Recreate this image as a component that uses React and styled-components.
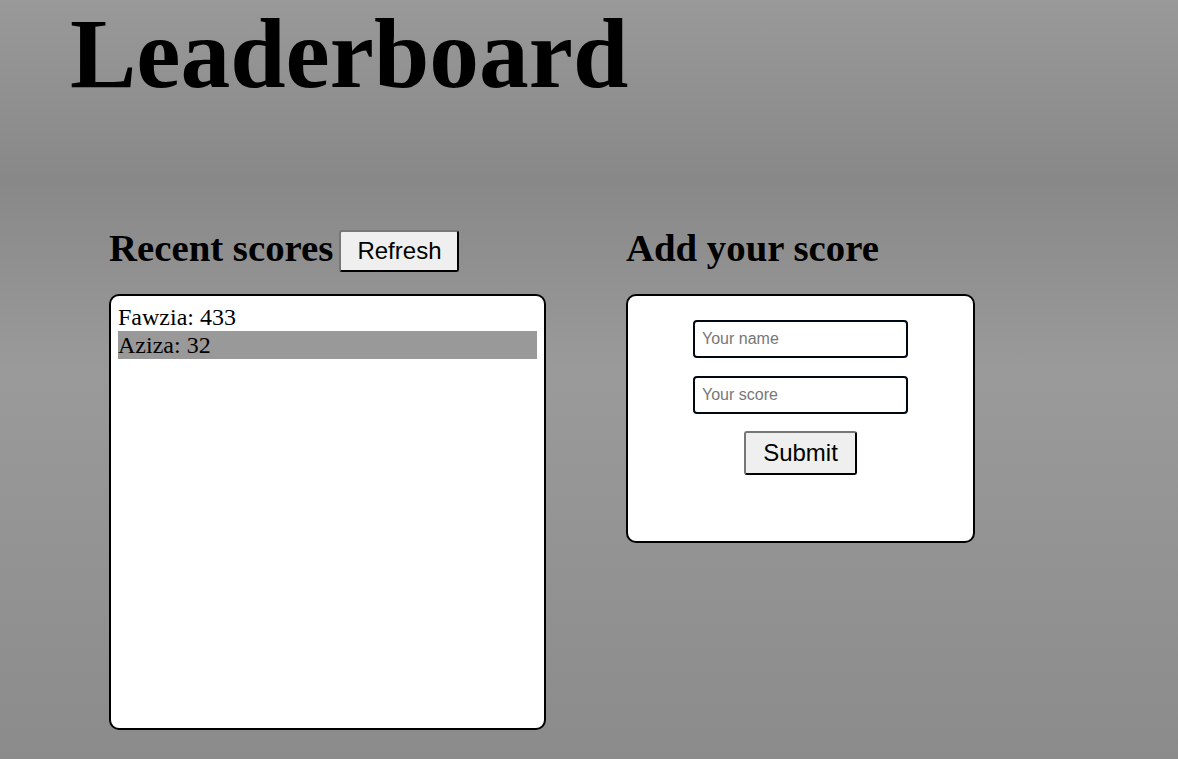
import React from 'react'
import styled, { createGlobalStyle } from 'styled-components'

const GlobalStyle = createGlobalStyle`
    html, body {
        margin: 0;
        min-height: 100%;
    }
    body {
        background: linear-gradient(to bottom, #999 0px, #888 180px, #9a9a9a 370px, #8b8b8b 759px);
        background-repeat: no-repeat;
        min-height: 759px;
        font-family: "Liberation Serif", "Times New Roman", serif;
        color: #000;
    }
`

const Page = styled.div`
    padding: 0 0 0 70px;
`

const Title = styled.h1`
    margin: 0;
    font-size: 99.5px;
    line-height: 108px;
    font-weight: bold;
`

const Columns = styled.div`
    display: flex;
    gap: 80px;
    margin-top: 118px;
    padding-left: 39px;
`

const Column = styled.section`
    display: flex;
    flex-direction: column;
`

const HeadingRow = styled.div`
    display: flex;
    align-items: flex-start;
    gap: 6px;
    height: 44px;
    margin-bottom: 24px;
`

const Heading = styled.h2`
    margin: 0;
    font-size: 38.8px;
    font-weight: bold;
    line-height: 44px;
`

const Button = styled.button`
    font-family: "Liberation Sans", Arial, sans-serif;
    font-size: 24px;
    line-height: 28px;
    padding: ${p => p.$tall ? '6px 17px' : '5px 16px'};
    margin-top: ${p => p.$tall ? '-1px' : '4px'};
    background: #efefef;
    color: #000;
    border: 2px outset #767676;
    border-right-color: #2b2b2b;
    border-bottom-color: #2b2b2b;
    border-radius: 3px;
    cursor: pointer;
`

const Card = styled.div`
    background: #fff;
    border: 2px solid #000;
    border-radius: 10px;
    box-sizing: border-box;
    width: ${p => p.$width}px;
    height: ${p => p.$height}px;
`

const ScoreList = styled.ul`
    list-style: none;
    margin: 0;
    padding: 7px;
`

const ScoreItem = styled.li`
    font-size: 24px;
    line-height: 28px;
    background: ${p => p.$odd ? '#999' : 'transparent'};
`

const Form = styled.form`
    display: flex;
    flex-direction: column;
    align-items: center;
    padding-top: 24px;
    gap: 18px;
`

const Input = styled.input`
    box-sizing: border-box;
    width: 215px;
    height: 38px;
    border: 2px solid #000814;
    border-radius: 4px;
    padding: 0 7px;
    font-family: "Liberation Sans", Arial, sans-serif;
    font-size: 16px;
    outline: none;

    &::placeholder {
        color: #777;
    }
`

const scores = [
    { name: 'Fawzia', score: 433 },
    { name: 'Aziza', score: 32 },
]

const App = () => (
    <Page>
        <GlobalStyle />
        <Title>Leaderboard</Title>
        <Columns>
            <Column>
                <HeadingRow>
                    <Heading>Recent scores</Heading>
                    <Button type="button">Refresh</Button>
                </HeadingRow>
                <Card $width={437} $height={436}>
                    <ScoreList>
                        {scores.map((s, i) => (
                            <ScoreItem key={s.name} $odd={i % 2 === 1}>{s.name}: {s.score}</ScoreItem>
                        ))}
                    </ScoreList>
                </Card>
            </Column>
            <Column>
                <HeadingRow>
                    <Heading>Add your score</Heading>
                </HeadingRow>
                <Card $width={349} $height={249}>
                    <Form onSubmit={e => e.preventDefault()}>
                        <Input placeholder="Your name" />
                        <Input placeholder="Your score" />
                        <Button type="submit" $tall>Submit</Button>
                    </Form>
                </Card>
            </Column>
        </Columns>
    </Page>
)

export default App
